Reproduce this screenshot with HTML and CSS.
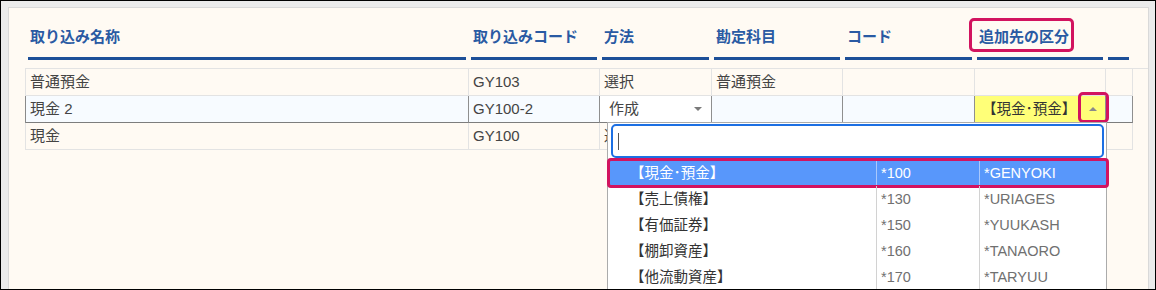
FILE: index.html
```html
<!DOCTYPE html>
<html lang="ja">
<head>
<meta charset="utf-8">
<title>取り込み設定</title>
<link rel="stylesheet" href="styles.css">
</head>
<body>
<div class="panel">
  <div class="tbl">
    <div class="head">
      <div class="th"><span class="tx">取り込み名称</span></div>
      <div class="th"><span class="tx">取り込みコード</span></div>
      <div class="th"><span class="tx">方法</span></div>
      <div class="th"><span class="tx">勘定科目</span></div>
      <div class="th"><span class="tx">コード</span></div>
      <div class="th"><span class="tx mark-head">追加先の区分</span></div>
      <div class="th"><span class="tx"></span></div>
    </div>
    <div class="rows">
      <div class="row">
        <div class="td">普通預金</div>
        <div class="td">GY103</div>
        <div class="td">選択</div>
        <div class="td">普通預金</div>
        <div class="td"></div>
        <div class="td"></div>
        <div class="td"></div>
      </div>
      <div class="row edit">
        <div class="td">現金 2</div>
        <div class="td">GY100-2</div>
        <div class="td sel"><span>作成</span><span class="tri-down"></span></div>
        <div class="td"></div>
        <div class="td"></div>
        <div class="td yel"><span class="ytx">【現金･預金】</span><span class="tog"><span class="tri-up"></span></span></div>
        <div class="td"></div>
      </div>
      <div class="row">
        <div class="td">現金</div>
        <div class="td">GY100</div>
        <div class="td">選択</div>
        <div class="td"></div>
        <div class="td"></div>
        <div class="td"></div>
        <div class="td"></div>
      </div>
    </div>
  </div>

  <div class="dd">
    <div class="search"><div class="input"><span class="caret"></span></div></div>
    <div class="opts">
      <div class="opt hl"><span class="nm">【現金･預金】</span><span class="cd">*100</span><span class="cd">*GENYOKI</span></div>
      <div class="opt"><span class="nm">【売上債権】</span><span class="cd">*130</span><span class="cd">*URIAGES</span></div>
      <div class="opt"><span class="nm">【有価証券】</span><span class="cd">*150</span><span class="cd">*YUUKASH</span></div>
      <div class="opt"><span class="nm">【棚卸資産】</span><span class="cd">*160</span><span class="cd">*TANAORO</span></div>
      <div class="opt"><span class="nm">【他流動資産】</span><span class="cd">*170</span><span class="cd">*TARYUU</span></div>
    </div>
  </div>
</div>
</body>
</html>
```

FILE: styles.css
```css
html, body {
  margin: 0;
  overflow: hidden;
}
body {
  width: 1156px;
  height: 290px;
  box-sizing: border-box;
  border: 1px solid #000;
  background: #ebebeb;
  padding: 6px 6px 0 7px;
  font-family: "Liberation Sans", "Noto Sans CJK JP", sans-serif;
  font-size: 15px;
  color: #444;
}
.panel {
  position: relative;
  height: 100%;
  box-sizing: border-box;
  border: 1px solid #d9d9d9;
  border-bottom: none;
  background: #fffaf3;
  padding: 19px 0 0 16px;
  overflow: hidden;
}

/* header */
.head, .row {
  display: grid;
  grid-template-columns: 443px 131px 112px 131px 132px 131px 27px;
  width: 1107px;
}
.head {
  padding-left: 1px;
}
.th {
  padding: 0 3px 0 2px;
}
.th:last-child {
  padding-right: 4px;
}
.tx {
  display: block;
  position: relative;
  height: 20px;
  line-height: 20px;
  padding: 0 0 10px 2px;
  border-bottom: 3px solid #1d4f98;
  font-weight: bold;
  color: #2a5aa3;
  white-space: nowrap;
}
.mark-head::after {
  content: "";
  position: absolute;
  left: -8px;
  top: -9px;
  width: 99px;
  height: 28px;
  border: 3px solid #d2135f;
  border-radius: 5px;
}

/* rows */
.rows {
  margin-top: 8px;
  border-top: 1px solid #e3e3e3;
}
.row {
  border-left: 1px solid #e3e3e3;
}
.td {
  height: 26px;
  line-height: 26px;
  padding-left: 4px;
  border-right: 1px solid #e3e3e3;
  border-bottom: 1px solid #e3e3e3;
  white-space: nowrap;
  overflow: hidden;
}
.row.edit {
  border-left-color: #8a8a8a;
  background: #f7fbff;
}
.row.edit .td {
  border-right-color: #8f8f8f;
  border-bottom-color: #7d7d7d;
}
.sel {
  display: flex;
  align-items: center;
  background: #fff;
  padding-left: 9px;
  padding-right: 9px;
}
.tri-down {
  margin-left: auto;
  width: 0;
  height: 0;
  border-left: 4px solid transparent;
  border-right: 4px solid transparent;
  border-top: 4px solid #7a7a7a;
}
.yel {
  display: flex;
  align-items: center;
  background: #ffff78;
  padding-left: 7px;
  overflow: visible;
}
.ytx {
  color: #333;
  font-size: 14.5px;
}
.tog {
  position: relative;
  margin-left: auto;
  flex: none;
  width: 24px;
  height: 26px;
  display: flex;
  align-items: center;
  justify-content: center;
}
.tog::after {
  content: "";
  position: absolute;
  left: -3px;
  top: -4px;
  width: 25px;
  height: 25px;
  border: 3px solid #d2135f;
  border-radius: 5px;
}
.tri-up {
  width: 0;
  height: 0;
  border-left: 4px solid transparent;
  border-right: 4px solid transparent;
  border-bottom: 4px solid #8a8a8a;
}

/* dropdown */
.dd {
  position: absolute;
  left: 598px;
  top: 114px;
  width: 500px;
  height: 168px;
  box-sizing: border-box;
  border: 1px solid #ababab;
  border-bottom: none;
  background: #fff;
  font-size: 14.5px;
}
.search {
  padding: 1px 2px 2px 3px;
}
.input {
  height: 34px;
  box-sizing: border-box;
  border: 2px solid #1c6fe3;
  border-radius: 5px;
  display: flex;
  align-items: center;
  padding-left: 5px;
}
.caret {
  width: 1px;
  height: 17px;
  background: #555;
}
.opt {
  position: relative;
  display: grid;
  grid-template-columns: 269px 103px 1fr;
  height: 26px;
  line-height: 26px;
  color: #707070;
}
.opt .nm {
  padding-left: 22px;
  color: #333;
  border-right: 1px solid #d2d2d2;
}
.opt .cd {
  padding-left: 4px;
}
.opt .cd:nth-child(2) {
  border-right: 1px solid #d2d2d2;
}
.opt.hl {
  background: #5897fb;
  color: #fff;
}
.opt.hl .nm {
  color: #fff;
  border-right-color: #a9c8fc;
}
.opt.hl .cd:nth-child(2) {
  border-right-color: #a9c8fc;
}
.opt.hl::after {
  content: "";
  position: absolute;
  left: -1px;
  top: -2px;
  right: -3px;
  bottom: -2px;
  border: 3px solid #d2135f;
  border-radius: 4px;
}
```
